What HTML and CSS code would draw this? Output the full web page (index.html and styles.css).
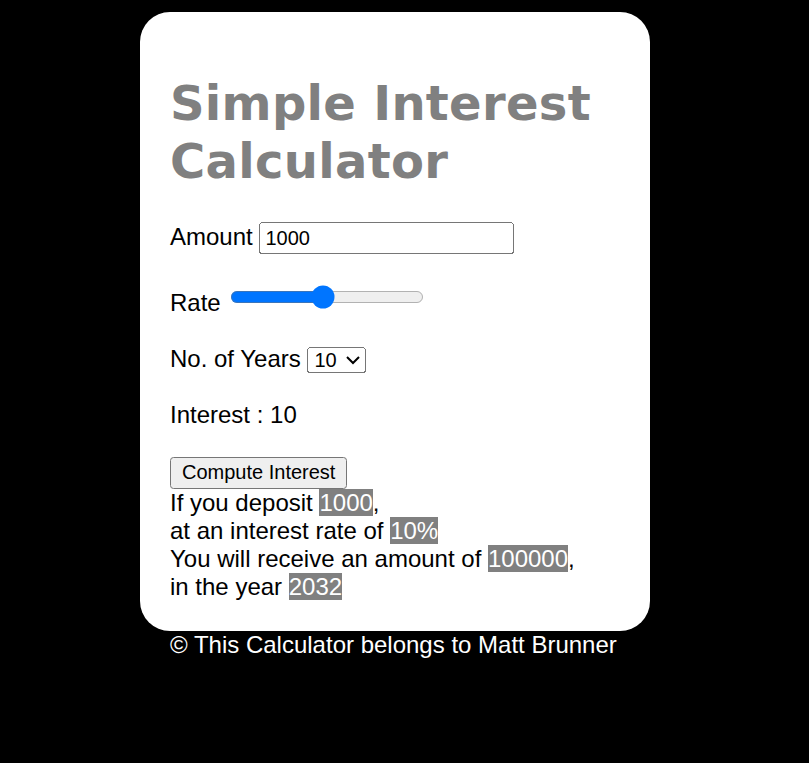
FILE: index.html
```html
<!DOCTYPE html>
<html>
<head>
<meta charset="utf-8">
<link rel="stylesheet" href="styles.css">
</head>
<body>
<div class="wrap">
  <div class="card">
    <h1 class="title">Simple Interest Calculator</h1>
    <p class="row">Amount <input class="ctl" type="number" value="1000"></p>
    <p class="row">Rate <input class="ctl range" type="range" min="1" max="20" value="10"></p>
    <p class="row">No. of Years <select class="ctl years"><option>10</option></select></p>
    <p class="row">Interest : 10</p>
    <div class="btnrow"><button class="ctl">Compute Interest</button></div>
    <div class="result">
      <div>If you deposit <span class="hl">1000</span>,</div>
      <div>at an interest rate of <span class="hl">10%</span></div>
      <div>You will receive an amount of <span class="hl">100000</span>,</div>
      <div>in the year <span class="hl">2032</span></div>
    </div>
  </div>
  <div class="footer">© This Calculator belongs to Matt Brunner</div>
</div>
</body>
</html>
```
FILE: styles.css
```css
html, body {
  background: #000;
}
body {
  margin: 12px;
  font-family: "Liberation Sans", Arial, sans-serif;
  font-size: 24px;
  color: #000;
}
.wrap {
  margin-left: 128px;
  width: 510px;
}
.card {
  background: #fff;
  border-radius: 30px;
  padding: 30px;
}
.title {
  font-family: "DejaVu Sans", Verdana, sans-serif;
  font-weight: bold;
  font-size: 48px;
  line-height: 58px;
  letter-spacing: 0.3px;
  color: #808080;
  margin: 32px 0;
}
.row {
  margin: 28px 0;
}
.ctl {
  zoom: 1.5;
}
input.ctl[type=number] {
  width: 162px;
}
input.ctl[type=number]::-webkit-inner-spin-button {
  -webkit-appearance: none;
}
.range {
  vertical-align: 1px;
}
.years {
  width: 39px;
}
.btnrow {
  margin-top: 28px;
}
.hl {
  background: #808080;
  color: #fff;
}
.footer {
  color: #fff;
  padding-left: 30px;
}
```
